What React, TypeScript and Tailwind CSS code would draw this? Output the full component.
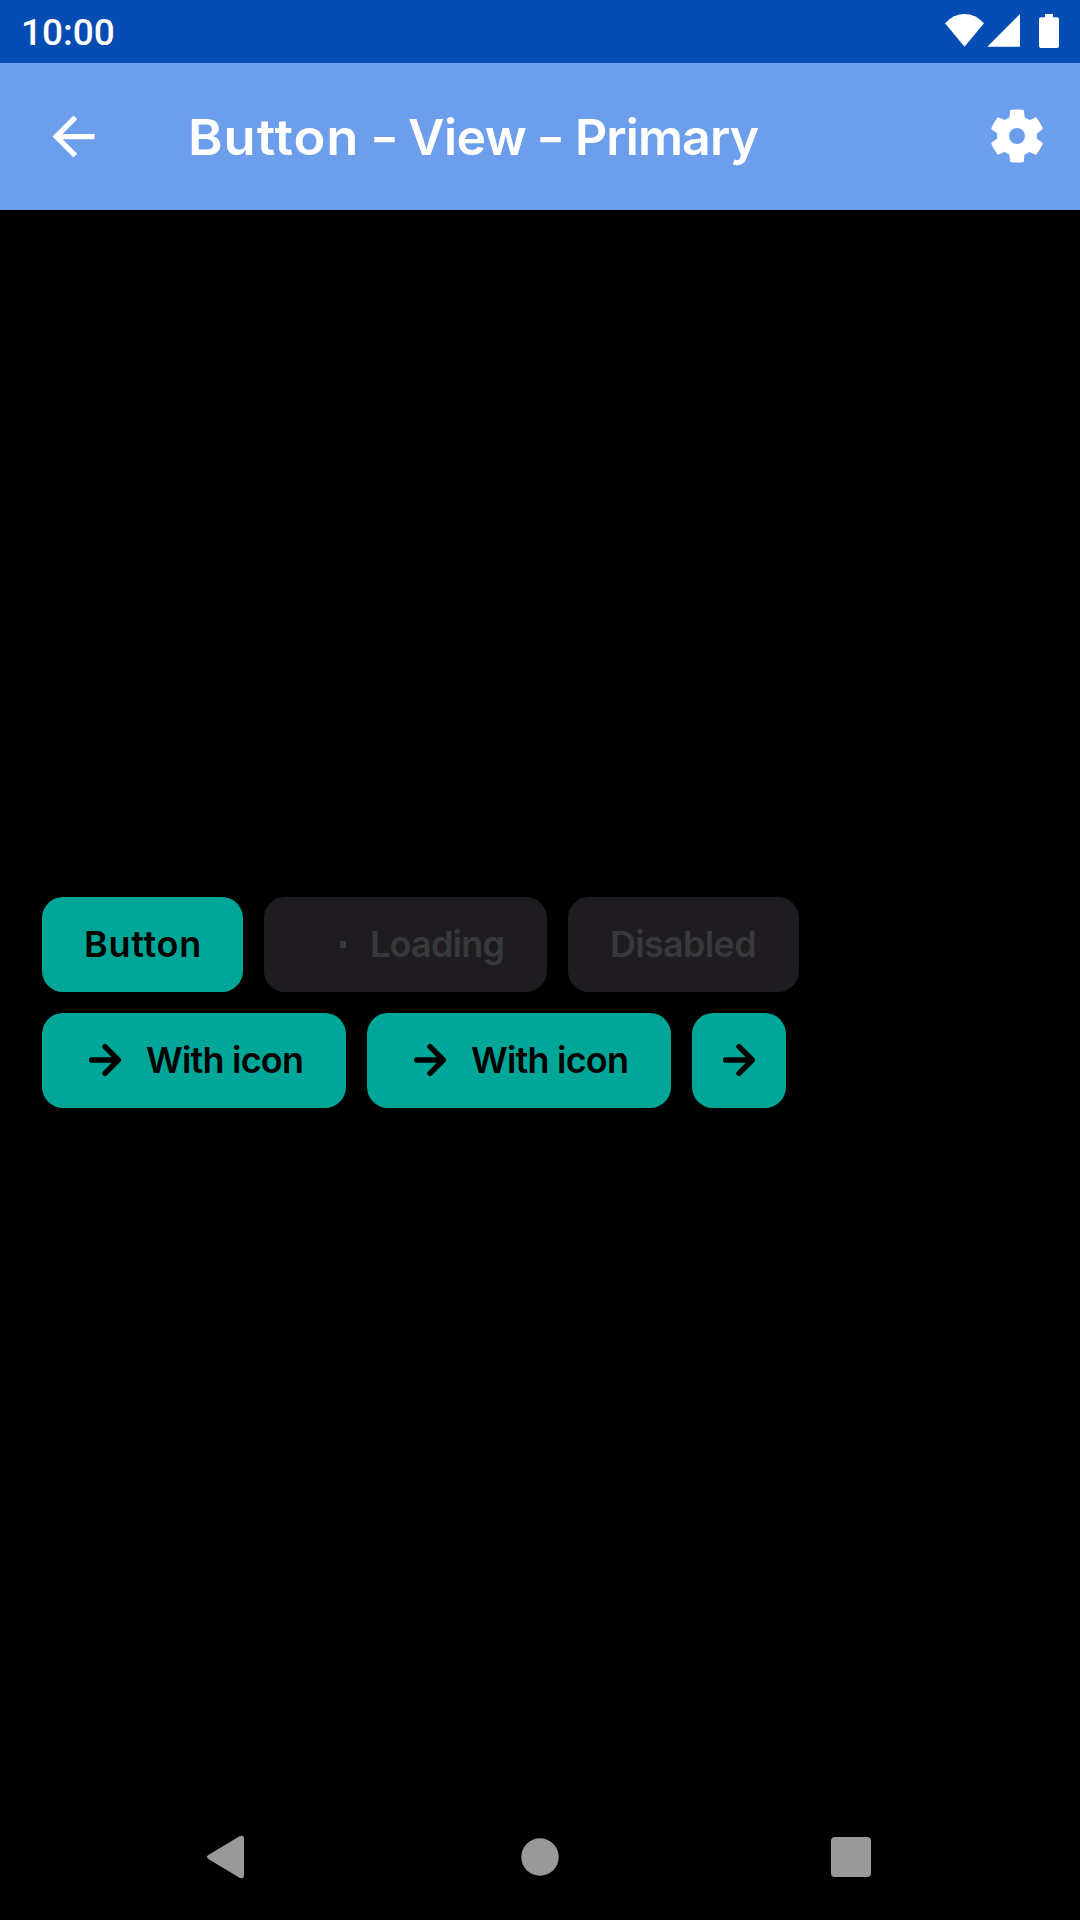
import React from "react";

const ArrowRight = () => (
  <svg className="h-[42px] w-[42px] shrink-0" viewBox="0 0 42 42" fill="none" stroke="black" strokeWidth="5.4" strokeLinecap="round" strokeLinejoin="round">
    <path d="M7.7 21H33.5M21 7.7L34.3 21L21 34.3" />
  </svg>
);

const tooth = "M-7.5 -18L-6.9 -25.2Q-6.7 -26.1 -5.8 -26.2Q0 -26.9 5.8 -26.2Q6.7 -26.1 6.9 -25.2L7.8 -18Q8.6 -16.2 10.4 -16.3L0 0L-10.4 -16.3Q-8.6 -16.2 -7.5 -18Z";

const Gear = () => (
  <svg className="h-[54px] w-[54px]" viewBox="-27 -27 54 54" fill="white">
    <path d="M0 -20A20 20 0 1 0 0 20A20 20 0 1 0 0 -20Z" />
    {[0, 60, 120, 180, 240, 300].map((a) => (
      <path key={a} d={tooth} transform={`rotate(${a})`} />
    ))}
    <circle r="8" fill="#6c9eeb" />
  </svg>
);

export default function App() {
  return (
    <div className="flex h-[1920px] w-[1080px] flex-col overflow-hidden bg-black font-['Inter',sans-serif]">
      <div className="flex h-[63px] items-center justify-between bg-[#064db3] pl-[21px] text-white">
        <span className="pt-[1px] font-['Roboto',sans-serif] text-[37px] leading-none font-medium">10:00</span>
        <svg className="h-[63px] w-[140px]" viewBox="940 0 140 63" fill="white">
          <path d="M945 23.3Q953.5 14 964.5 14Q975.5 14 984 23.3L964.5 46.7Z" />
          <path d="M987.3 46.8H1020V14Z" />
          <path d="M1045 14H1053V17.2H1057Q1059 17.2 1059 19.2V46Q1059 48 1057 48H1041Q1039 48 1039 46V19.2Q1039 17.2 1041 17.2H1045Z" />
        </svg>
      </div>
      <header className="flex h-[147px] items-center bg-[#6c9eeb] text-white">
        <svg className="ml-[42px] h-[63px] w-[63px] shrink-0" viewBox="0 0 24 24" fill="white">
          <path d="M20 11H7.83l5.59-5.59L12 4l-8 8 8 8 1.41-1.41L7.83 13H20v-2z" />
        </svg>
        <h1 className="ml-[83px] flex w-[802px] items-center text-[50px] leading-none font-semibold">
          <span className="w-[182px] origin-left scale-x-105 tracking-[0.9px]">Button</span>
          <span className="w-[38px] origin-left scale-x-125">-</span>
          <span className="w-[128px] tracking-[-0.5px]">View</span>
          <span className="w-[39px] origin-left scale-x-125">-</span>
          <span className="tracking-[-0.9px]">Primary</span>
        </h1>
        <div className="mb-[2px] shrink-0"><Gear /></div>
      </header>
      <main className="mt-[687px] ml-[42px] flex flex-col gap-[21px] text-[36px] font-semibold leading-none">
        <div className="flex gap-[21px]">
          <button className="flex h-[95px] w-[201px] items-center rounded-[21px] bg-[#00a799] pb-[2px] pl-[42px] tracking-[0.7px] text-black">Button</button>
          <button className="flex h-[95px] w-[283px] items-center rounded-[21px] bg-[#1e1c21] pb-[2px] pl-[42px] tracking-[-0.8px] text-[#39393b]">
            <span className="mr-[22px] flex w-[42px] justify-end pr-[2px]"><span className="mt-[2px] h-[7px] w-[6px] bg-[#39393b]" /></span>
            Loading
          </button>
          <button className="flex h-[95px] w-[231px] items-center rounded-[21px] bg-[#1e1c21] pb-[2px] pl-[42px] tracking-[-0.7px] text-[#39393b]">Disabled</button>
        </div>
        <div className="flex gap-[21px]">
          {[0, 1].map((i) => (
            <button key={i} className="flex h-[95px] w-[304px] items-center gap-[20px] rounded-[21px] bg-[#00a799] pb-[2px] pl-[42px] tracking-[-0.8px] whitespace-nowrap text-black">
              <ArrowRight />
              With icon
            </button>
          ))}
          <button className="flex h-[95px] w-[94px] items-center justify-center rounded-[21px] bg-[#00a799] pb-[2px]">
            <ArrowRight />
          </button>
        </div>
      </main>
      <nav className="mt-auto h-[126px]">
        <svg className="h-[126px] w-[1080px]" viewBox="0 1794 1080 126" fill="#999">
          <path d="M208.3 1855L239.5 1836.3Q244 1834.5 244 1839V1875Q244 1879.5 239.5 1877.7L208.3 1859Q205.5 1857 208.3 1855Z" />
          <circle cx="540" cy="1857" r="18.7" />
          <rect x="831" y="1837" width="40" height="40" rx="4" />
        </svg>
      </nav>
    </div>
  );
}
